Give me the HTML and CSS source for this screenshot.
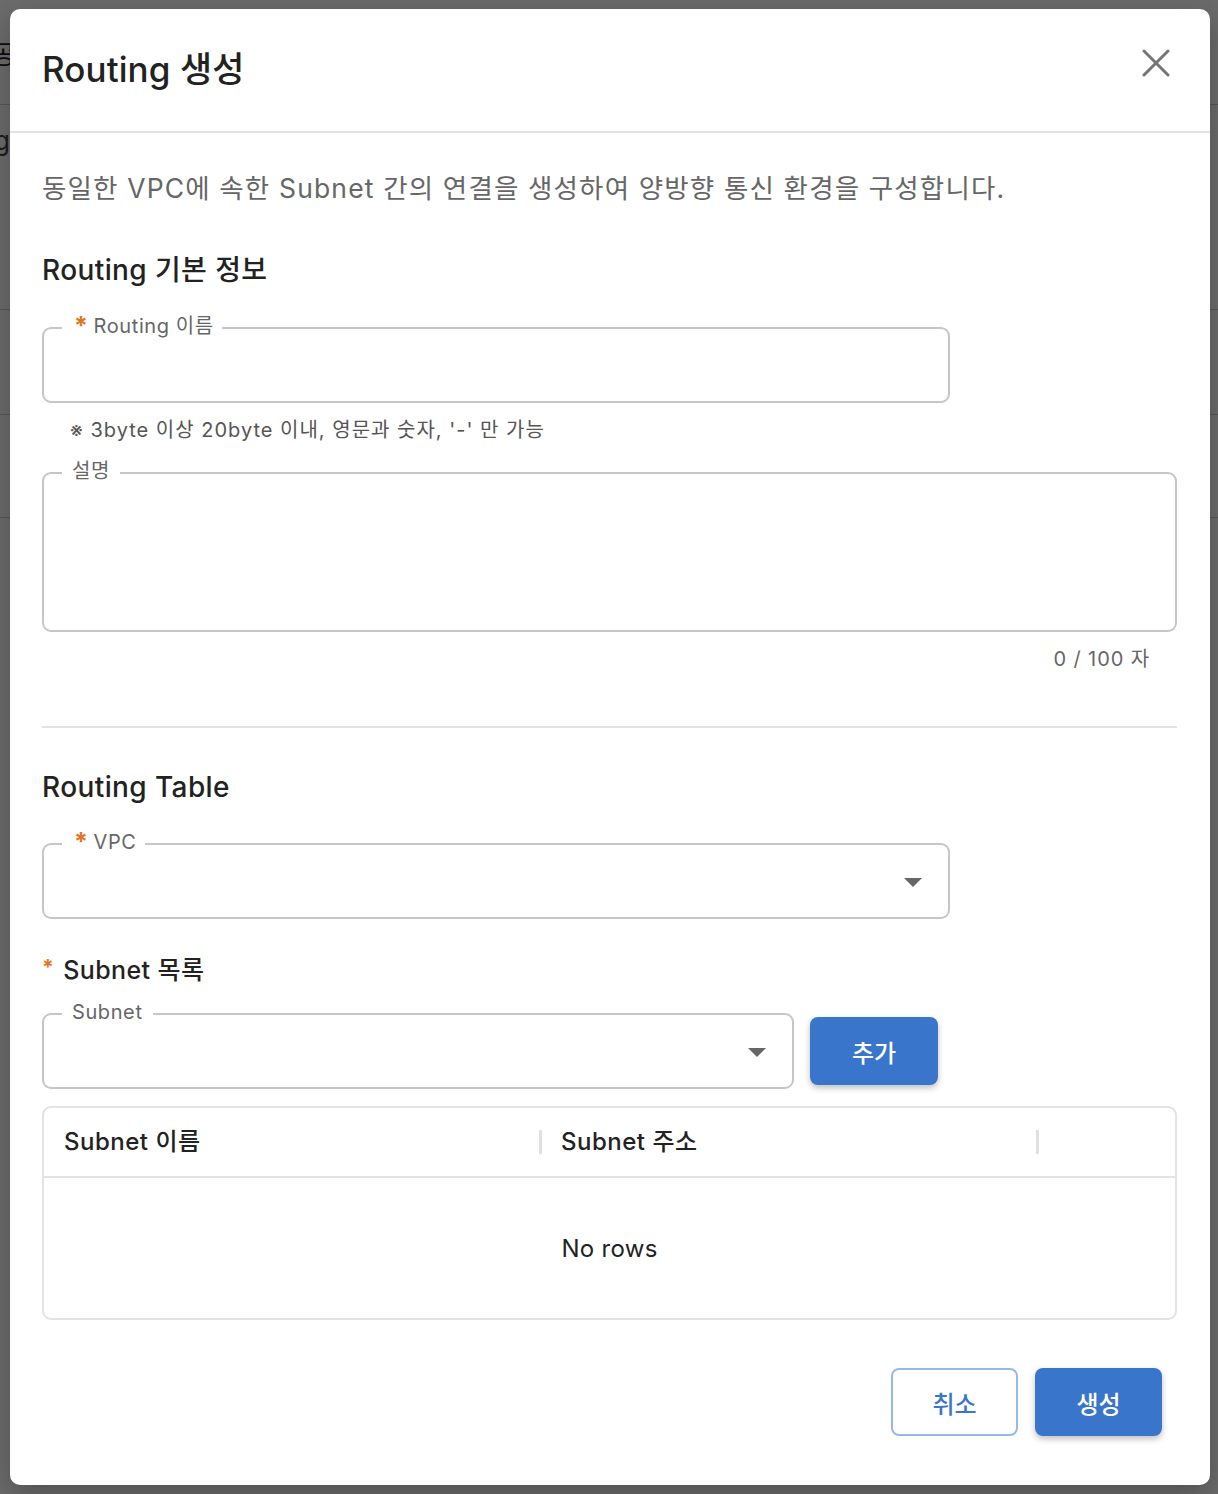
FILE: index.html
```html
<!DOCTYPE html>
<html lang="ko">
<head>
<meta charset="utf-8">
<title>Routing 생성</title>
<link rel="stylesheet" href="styles.css">
</head>
<body>
<div class="page">
  <div class="page-row r1"><span class="ghost">공</span></div>
  <div class="page-row r2"><span class="ghost g">g</span></div>
  <div class="page-row r3"></div>
  <div class="page-row r4"></div>
</div>
<div class="backdrop"></div>
<div class="modal">
  <div class="modal-head">
    <h1 class="title">Routing 생성</h1>
    <button class="close" aria-label="닫기">
      <svg width="28" height="28" viewBox="0 0 28 28"><path d="M2 2 L26 26 M26 2 L2 26" stroke="#757575" stroke-width="3" stroke-linecap="round"/></svg>
    </button>
  </div>
  <div class="modal-body">
    <p class="desc">동일한 VPC에 속한 Subnet 간의 연결을 생성하여 양방향 통신 환경을 구성합니다.</p>

    <h2 class="section first">Routing 기본 정보</h2>
    <div class="field name-field">
      <span class="label"><span class="req">*</span>Routing 이름</span>
    </div>
    <p class="helper">※ 3byte 이상 20byte 이내, 영문과 숫자, '-' 만 가능</p>
    <div class="field area-field">
      <span class="label plain">설명</span>
    </div>
    <p class="counter">0 / 100 자</p>

    <hr class="divider">

    <h2 class="section second">Routing Table</h2>
    <div class="field select-field vpc-field">
      <span class="label"><span class="req">*</span>VPC</span>
      <span class="arrow"></span>
    </div>

    <h3 class="subhead"><span class="req small">*</span>Subnet 목록</h3>
    <div class="subnet-row">
      <div class="field select-field subnet-field">
        <span class="label plain">Subnet</span>
        <span class="arrow"></span>
      </div>
      <button class="btn primary add">추가</button>
    </div>

    <div class="grid">
      <div class="grid-head">
        <div class="col">Subnet 이름</div>
        <div class="col sep">Subnet 주소</div>
        <div class="col sep end"></div>
      </div>
      <div class="grid-body">No rows</div>
    </div>
  </div>
  <div class="modal-foot">
    <button class="btn outline">취소</button>
    <button class="btn primary">생성</button>
  </div>
</div>
</body>
</html>
```

FILE: styles.css
```css
* { box-sizing: border-box; }
html, body { margin: 0; padding: 0; }
body {
  width: 1218px;
  height: 1494px;
  overflow: hidden;
  position: relative;
  background: #ffffff;
  font-family: "Inter", "Noto Sans CJK KR", sans-serif;
  color: #222;
}

/* faint page underneath */
.page-row { border-bottom: 1px solid #d0d0d0; position: relative; }
.r1 { height: 105px; }
.r2 { height: 205px; }
.r3 { height: 105px; }
.r4 { height: 103px; }
.ghost { position: absolute; left: -8px; top: 34px; font-size: 26px; color: #222; }
.ghost.g { top: 20px; left: -6px; color: #444; }

.backdrop {
  position: absolute;
  inset: 0;
  background: rgba(0, 0, 0, 0.58);
}

.modal {
  position: absolute;
  left: 10px;
  top: 9px;
  width: 1200px;
  height: 1476px;
  background: #fff;
  border-radius: 10px;
  box-shadow: 0 10px 30px rgba(0,0,0,0.25);
  display: flex;
  flex-direction: column;
}

.modal-head {
  height: 124px;
  border-bottom: 2px solid #e3e3e3;
  display: flex;
  align-items: center;
  justify-content: space-between;
  padding: 0 40px 8px 32px;
}
.title {
  margin: 0;
  font-size: 35px;
  font-weight: 500;
  color: #222;
  letter-spacing: 0.1px;
}
.close {
  border: 0;
  background: none;
  padding: 0;
  width: 28px;
  height: 28px;
  margin-top: -6px;
  display: flex;
}

.modal-body {
  padding: 0 33px 0 32px;
  flex: 1;
}
.desc {
  margin: 37px 0 0;
  font-size: 26.5px;
  line-height: 36px;
  color: #666;
  letter-spacing: 1.15px;
}
.section {
  margin: 45px 0 0;
  font-size: 28px;
  line-height: 36px;
  font-weight: 500;
  color: #222;
  letter-spacing: 0.4px;
}
.section.first { margin-top: 46px; }
.section.second { margin-top: 41px; }

.field {
  position: relative;
  border: 2px solid #c6c6c6;
  border-radius: 9px;
  height: 76px;
}
.name-field { width: 908px; margin-top: 39px; }
.area-field { height: 160px; margin-top: 29px; }
.label {
  position: absolute;
  left: 18px;
  top: -16px;
  background: #fff;
  padding: 0 8px 0 12px;
  font-size: 20px;
  line-height: 26px;
  color: #666;
  letter-spacing: 0.6px;
  display: flex;
  align-items: center;
}
.label.plain { padding: 0 10px; }
.req {
  color: #e2751f;
  font-size: 25px;
  line-height: 20px;
  margin-right: 5px;
  font-weight: 700;
  position: relative;
  top: 0;
}
.req.small { font-size: 21px; margin-right: 9px; top: -2px; }

.helper {
  margin: 14px 0 0 28px;
  font-size: 20px;
  line-height: 26px;
  color: #555;
  letter-spacing: 1.0px;
}
.counter {
  margin: 13px 27px 0 0;
  text-align: right;
  font-size: 20px;
  line-height: 28px;
  color: #666;
  letter-spacing: 0.9px;
}

.divider {
  margin: 53px 0 0;
  border: 0;
  border-top: 2px solid #e3e3e3;
}

.select-field .arrow {
  position: absolute;
  right: 26px;
  top: 33px;
  width: 0;
  height: 0;
  border-left: 9px solid transparent;
  border-right: 9px solid transparent;
  border-top: 9px solid #666;
}
.vpc-field { width: 908px; margin-top: 38px; }

.subhead {
  margin: 33px 0 0;
  font-size: 25px;
  line-height: 36px;
  font-weight: 500;
  color: #222;
  letter-spacing: 0.4px;
  display: flex;
  align-items: center;
}

.subnet-row {
  display: flex;
  align-items: center;
  gap: 16px;
  margin-top: 25px;
}
.subnet-field { width: 752px; }

.btn {
  width: 127px;
  height: 68px;
  border-radius: 8px;
  font-family: inherit;
  font-size: 24px;
  font-weight: 500;
  cursor: pointer;
}
.btn.add { width: 128px; }
.btn.primary {
  background: #3a75cc;
  color: #fff;
  border: 0;
  box-shadow: 0 3px 6px rgba(0,0,0,0.25);
}
.btn.outline {
  background: #fff;
  color: #3a75cc;
  border: 2px solid #98b9e8;
}

.grid {
  margin-top: 17px;
  border: 2px solid #e3e3e3;
  border-radius: 9px;
  height: 214px;
  display: flex;
  flex-direction: column;
}
.grid-head {
  height: 70px;
  border-bottom: 2px solid #e3e3e3;
  display: grid;
  grid-template-columns: 497px 497px 1fr;
  align-items: center;
}
.col {
  font-size: 24px;
  font-weight: 500;
  color: #222;
  letter-spacing: 0.5px;
  padding-left: 20px;
  height: 26px;
  line-height: 26px;
  position: relative;
  display: flex;
  align-items: center;
}
.col.sep::before {
  content: "";
  position: absolute;
  left: -2px;
  top: 1px;
  width: 3px;
  height: 24px;
  background: #e0e0e0;
}
.grid-body {
  flex: 1;
  display: flex;
  align-items: center;
  justify-content: center;
  font-size: 24px;
  color: #222;
  letter-spacing: 0.3px;
}

.modal-foot {
  display: flex;
  justify-content: flex-end;
  gap: 17px;
  padding: 0 48px 49px 0;
}
```
